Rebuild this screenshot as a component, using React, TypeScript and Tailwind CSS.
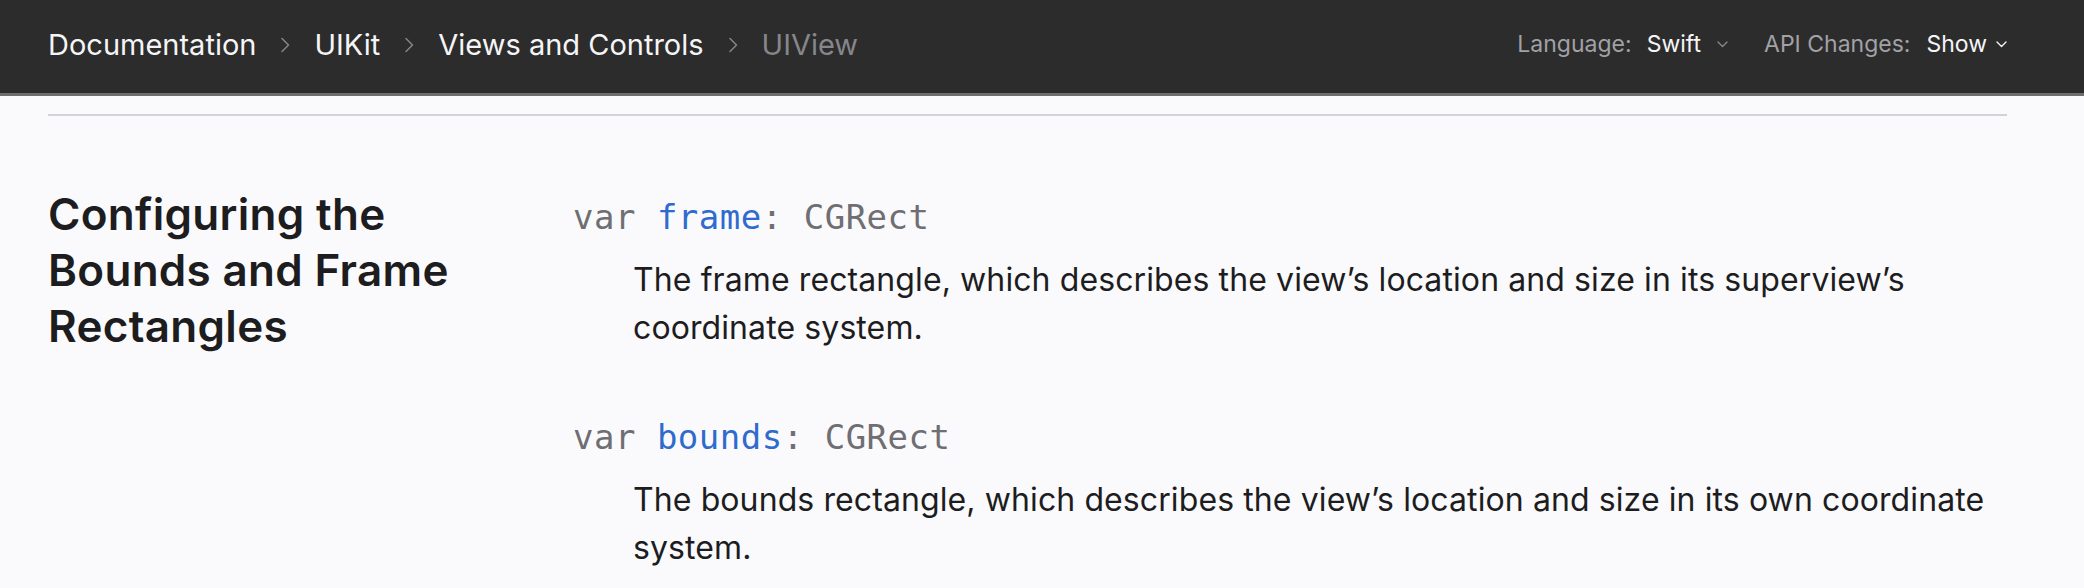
import React from 'react';

const Chevron = () => (
  <svg width="10" height="16" viewBox="0 0 10 16" fill="none" className="shrink-0">
    <path d="M2 1.5 L8.5 8 L2 14.5" stroke="#86868b" strokeWidth="1.5" strokeLinecap="round" strokeLinejoin="round" />
  </svg>
);

const Caret = ({ color }: { color: string }) => (
  <svg width="11" height="7" viewBox="0 0 11 7" fill="none" className="shrink-0">
    <path d="M1 1 L5.5 5.5 L10 1" stroke={color} strokeWidth="1.4" strokeLinecap="round" strokeLinejoin="round" />
  </svg>
);

const crumbs = ['Documentation', 'UIKit', 'Views and Controls'];

const symbols = [
  {
    name: 'frame',
    type: 'CGRect',
    text: 'The frame rectangle, which describes the view\u2019s location and size in its superview\u2019s coordinate system.',
  },
  {
    name: 'bounds',
    type: 'CGRect',
    text: 'The bounds rectangle, which describes the view\u2019s location and size in its own coordinate system.',
  },
];

export default function App() {
  return (
    <div className="min-h-[588px] bg-[#fafafc] font-['Inter','Noto_Sans',sans-serif] antialiased">
      {/* Nav bar */}
      <nav className="h-[96px] bg-[#2c2c2c] border-b-[3px] border-[#6e6e6e] flex items-center justify-between pl-[48px] pr-[77px] pb-[4px]">
        <div className="flex items-center gap-[24px] text-[29px] text-[#f5f5f7]">
          {crumbs.map(c => (
            <React.Fragment key={c}>
              <span>{c}</span>
              <Chevron />
            </React.Fragment>
          ))}
          <span className="text-[#86868b]">UIView</span>
        </div>
        <div className="flex items-center text-[23px]">
          <span className="text-[#a1a1a6]">Language:</span>
          <span className="text-[#f5f5f7] ml-[15px]">Swift</span>
          <span className="ml-[16px]"><Caret color="#86868b" /></span>
          <span className="text-[#a1a1a6] ml-[36px]">API Changes:</span>
          <span className="text-[#f5f5f7] ml-[16px]">Show</span>
          <span className="ml-[9px]"><Caret color="#f5f5f7" /></span>
        </div>
      </nav>

      <main className="ml-[48px] w-[1959px]">
        <div className="pt-[18px] border-b-2 border-[#d2d2d7]" />
        <section className="flex pt-[66px]">
          <div className="w-[525px] shrink-0 pt-[4px]">
            <h2 className="text-[44px] leading-[56px] font-semibold text-[#1d1d1f] tracking-[0.3px]">
              Configuring the<br />Bounds and Frame<br />Rectangles
            </h2>
          </div>
          <div className="flex-1 flex flex-col gap-[63px] pt-[13px]">
            {symbols.map(s => (
              <div key={s.name}>
                <div className="font-['DejaVu_Sans_Mono',monospace] text-[34px] leading-[44px] text-[#6e6e73] tracking-[0.5px]">
                  var <span className="text-[#2f6bcd]">{s.name}</span>: {s.type}
                </div>
                <p className="mt-[17px] pl-[60px] text-[32px] leading-[48px] text-[#1d1d1f] tracking-[0.1px]">{s.text}</p>
              </div>
            ))}
          </div>
        </section>
      </main>
    </div>
  );
}
